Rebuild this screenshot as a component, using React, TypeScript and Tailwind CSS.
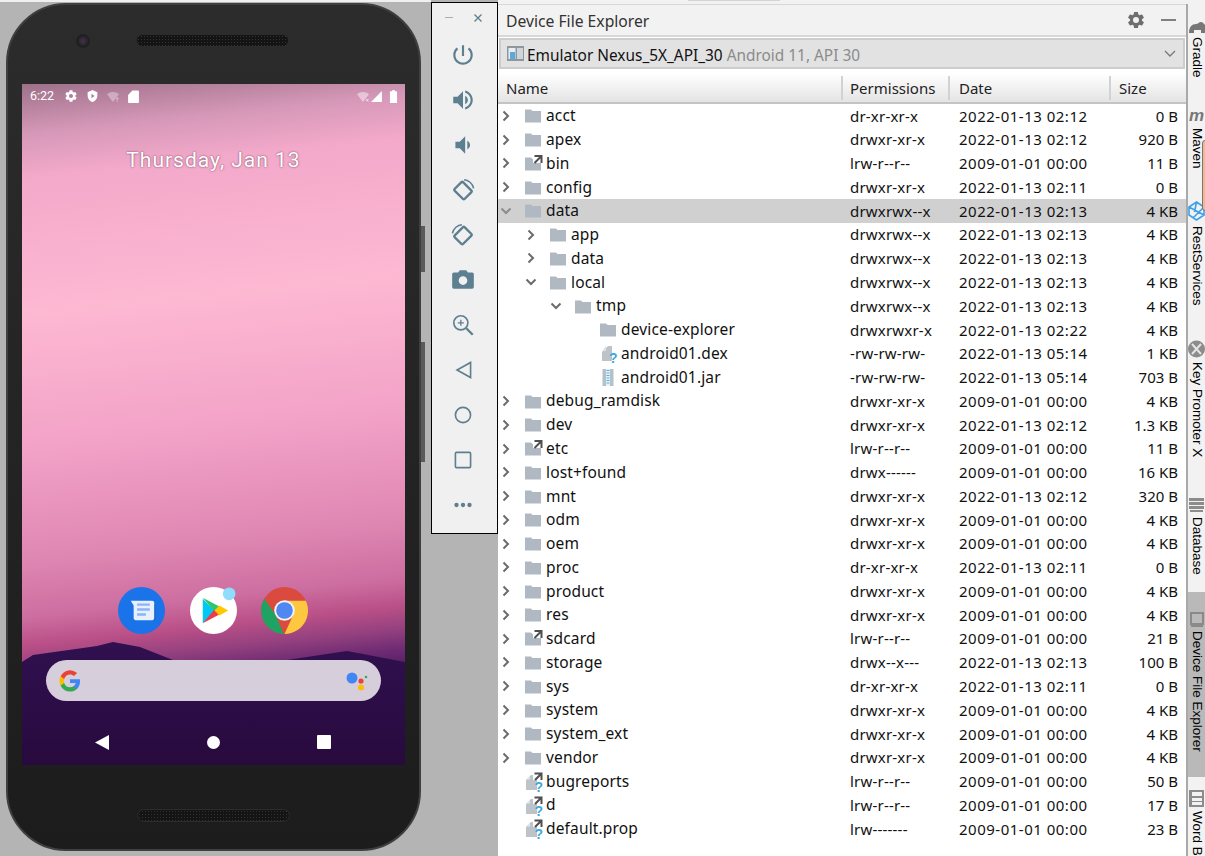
import React from 'react'

type Kind = 'folder' | 'link' | 'unknown' | 'jar' | 'linkfile'

interface Row {
  name: string
  depth: number
  arrow?: 'closed' | 'open'
  kind: Kind
  perm: string
  date: string
  size: string
  selected?: boolean
}

const D22 = '2022-01-13 '
const D09 = '2009-01-01 00:00'

const rows: Row[] = [
  { name: 'acct', depth: 0, arrow: 'closed', kind: 'folder', perm: 'dr-xr-xr-x', date: D22 + '02:12', size: '0 B' },
  { name: 'apex', depth: 0, arrow: 'closed', kind: 'folder', perm: 'drwxr-xr-x', date: D22 + '02:12', size: '920 B' },
  { name: 'bin', depth: 0, arrow: 'closed', kind: 'link', perm: 'lrw-r--r--', date: D09, size: '11 B' },
  { name: 'config', depth: 0, arrow: 'closed', kind: 'folder', perm: 'drwxr-xr-x', date: D22 + '02:11', size: '0 B' },
  { name: 'data', depth: 0, arrow: 'open', kind: 'folder', perm: 'drwxrwx--x', date: D22 + '02:13', size: '4 KB', selected: true },
  { name: 'app', depth: 1, arrow: 'closed', kind: 'folder', perm: 'drwxrwx--x', date: D22 + '02:13', size: '4 KB' },
  { name: 'data', depth: 1, arrow: 'closed', kind: 'folder', perm: 'drwxrwx--x', date: D22 + '02:13', size: '4 KB' },
  { name: 'local', depth: 1, arrow: 'open', kind: 'folder', perm: 'drwxrwx--x', date: D22 + '02:13', size: '4 KB' },
  { name: 'tmp', depth: 2, arrow: 'open', kind: 'folder', perm: 'drwxrwx--x', date: D22 + '02:13', size: '4 KB' },
  { name: 'device-explorer', depth: 3, kind: 'folder', perm: 'drwxrwxr-x', date: D22 + '02:22', size: '4 KB' },
  { name: 'android01.dex', depth: 3, kind: 'unknown', perm: '-rw-rw-rw-', date: D22 + '05:14', size: '1 KB' },
  { name: 'android01.jar', depth: 3, kind: 'jar', perm: '-rw-rw-rw-', date: D22 + '05:14', size: '703 B' },
  { name: 'debug_ramdisk', depth: 0, arrow: 'closed', kind: 'folder', perm: 'drwxr-xr-x', date: D09, size: '4 KB' },
  { name: 'dev', depth: 0, arrow: 'closed', kind: 'folder', perm: 'drwxr-xr-x', date: D22 + '02:12', size: '1.3 KB' },
  { name: 'etc', depth: 0, arrow: 'closed', kind: 'link', perm: 'lrw-r--r--', date: D09, size: '11 B' },
  { name: 'lost+found', depth: 0, arrow: 'closed', kind: 'folder', perm: 'drwx------', date: D09, size: '16 KB' },
  { name: 'mnt', depth: 0, arrow: 'closed', kind: 'folder', perm: 'drwxr-xr-x', date: D22 + '02:12', size: '320 B' },
  { name: 'odm', depth: 0, arrow: 'closed', kind: 'folder', perm: 'drwxr-xr-x', date: D09, size: '4 KB' },
  { name: 'oem', depth: 0, arrow: 'closed', kind: 'folder', perm: 'drwxr-xr-x', date: D09, size: '4 KB' },
  { name: 'proc', depth: 0, arrow: 'closed', kind: 'folder', perm: 'dr-xr-xr-x', date: D22 + '02:11', size: '0 B' },
  { name: 'product', depth: 0, arrow: 'closed', kind: 'folder', perm: 'drwxr-xr-x', date: D09, size: '4 KB' },
  { name: 'res', depth: 0, arrow: 'closed', kind: 'folder', perm: 'drwxr-xr-x', date: D09, size: '4 KB' },
  { name: 'sdcard', depth: 0, arrow: 'closed', kind: 'link', perm: 'lrw-r--r--', date: D09, size: '21 B' },
  { name: 'storage', depth: 0, arrow: 'closed', kind: 'folder', perm: 'drwx--x---', date: D22 + '02:13', size: '100 B' },
  { name: 'sys', depth: 0, arrow: 'closed', kind: 'folder', perm: 'dr-xr-xr-x', date: D22 + '02:11', size: '0 B' },
  { name: 'system', depth: 0, arrow: 'closed', kind: 'folder', perm: 'drwxr-xr-x', date: D09, size: '4 KB' },
  { name: 'system_ext', depth: 0, arrow: 'closed', kind: 'folder', perm: 'drwxr-xr-x', date: D09, size: '4 KB' },
  { name: 'vendor', depth: 0, arrow: 'closed', kind: 'folder', perm: 'drwxr-xr-x', date: D09, size: '4 KB' },
  { name: 'bugreports', depth: 0, kind: 'linkfile', perm: 'lrw-r--r--', date: D09, size: '50 B' },
  { name: 'd', depth: 0, kind: 'linkfile', perm: 'lrw-r--r--', date: D09, size: '17 B' },
  { name: 'default.prop', depth: 0, kind: 'linkfile', perm: 'lrw-------', date: D09, size: '23 B' },
]

function FileIcon({ kind }: { kind: Kind }) {
  const folder = 'M1 3.500h6l1.500 1.500h8.500v11.500H1z'
  return (
    <svg width="19" height="19" viewBox="0 0 19 19" className="shrink-0 overflow-visible">
      {(kind === 'folder' || kind === 'link') && <path d={folder} fill="#b0b9c1" />}
      {kind === 'link' && (
        <g>
          <rect x="9" y="0" width="10" height="9" fill="#fff" />
          <path d="M10.500 2h7v7M17 2.500l-6.500 6.500" fill="none" stroke="#4f4f4f" strokeWidth="2" />
        </g>
      )}
      {kind === 'unknown' && (
        <g>
          <path d="M3 17V8l6-6h4v15z" fill="#bcc4ca" />
          <path d="M3 7l4-5v5z" fill="#dfe3e6" />
          <text x="10" y="18.500" fontSize="14" fontWeight="700" fill="#3ea9dc" fontFamily="Liberation Sans, sans-serif">?</text>
        </g>
      )}
      {kind === 'jar' && (
        <g>
          <rect x="3.500" y="1" width="11" height="17" fill="#b6c0c7" />
          <rect x="7" y="1" width="4" height="17" fill="#e8f4fa" />
          <path d="M7.500 2.500h3M7.500 5h3M7.500 7.500h3M7.500 10h3M7.500 12.500h3M7.500 15h3" stroke="#55aedc" strokeWidth="1.200" />
        </g>
      )}
      {kind === 'linkfile' && (
        <g>
          <path d="M2 18V8l5-5h6v15z" fill="#bcc4ca" />
          <path d="M2 7.500l4-4v4z" fill="#e3e6e9" />
          <rect x="9" y="0" width="10" height="8" fill="#fff" />
          <path d="M10.500 1.500h7v6.500M17 2l-6 6" fill="none" stroke="#4f4f4f" strokeWidth="2" />
          <text x="10.500" y="19.500" fontSize="14" fontWeight="700" fill="#3ea9dc" fontFamily="Liberation Sans, sans-serif">?</text>
        </g>
      )}
    </svg>
  )
}

function Chevron({ open, muted }: { open: boolean; muted?: boolean }) {
  return (
    <svg width="12" height="12" viewBox="0 0 12 12">
      <path
        d={open ? 'M1.500 3.500L6 8l4.500-4.500' : 'M3.500 1.500L8 6l-4.500 4.500'}
        fill="none"
        stroke={muted ? '#8c8c8c' : '#6b6b6b'}
        strokeWidth="2"
      />
    </svg>
  )
}

function TreeRow({ row }: { row: Row }) {
  return (
    <div className={`flex h-[23.77px] items-center text-[15.500px] text-[#111] ${row.selected ? 'bg-[#d0d0d0]' : ''}`}>
      <div className="flex w-[343px] shrink-0 items-center" style={{ paddingLeft: row.depth * 25 }}>
        <div className="flex w-[16px] shrink-0 justify-center">
          {row.arrow && <Chevron open={row.arrow === 'open'} muted={row.selected} />}
        </div>
        <div className="ml-[10px] shrink-0">
          <FileIcon kind={row.kind} />
        </div>
        <span className="ml-[3px] tracking-[0.15px]">{row.name}</span>
      </div>
      <div className="w-[110px] shrink-0 pl-[9px] text-[15px] tracking-[0.2px]">{row.perm}</div>
      <div className="w-[151px] shrink-0 pl-[8px] text-[15px] tracking-[0.5px]">{row.date}</div>
      <div className="w-[76px] shrink-0 text-right text-[15px]">{row.size}</div>
    </div>
  )
}

function ColumnHead({ label, className }: { label: string; className: string }) {
  return <div className={`flex h-[24px] items-center border-r-2 border-[#d2d2d2] ${className}`}>{label}</div>
}

function FilePanel() {
  return (
    <div className="flex h-full w-[688px] flex-col bg-white font-['Noto_Sans',sans-serif]">
      <div className="h-[4px] shrink-0 bg-[#f2f2f2] pl-[190px]">
        <div className="h-[1px] w-[92px] bg-[#d4d4d4]" />
      </div>
      <div className="flex h-[33px] shrink-0 items-center justify-between border-t border-b-2 border-t-[#d8d8d8] border-b-[#d8d8d8] bg-[#f2f2f2] pl-[8px] pr-[10px] text-[15.700px] text-[#333]">
        <span className="translate-y-[2px]">Device File Explorer</span>
        <div className="flex items-center gap-[15px]">
          <svg width="20" height="20" viewBox="0 0 24 24" fill="#6e6e6e">
            <path d="M19.140 12.940a7.500 7.500 0 0 0 0-1.880l2.030-1.580a.5.5 0 0 0 .12-.64l-1.920-3.320a.5.5 0 0 0-.6-.22l-2.390.96a7 7 0 0 0-1.620-.94l-.36-2.540a.5.5 0 0 0-.5-.42h-3.840a.5.500 0 0 0-.48.420l-.36 2.540a7.300 7.300 0 0 0-1.620.94l-2.390-.96a.5.5 0 0 0-.6.220L2.690 8.840a.5.5 0 0 0 .12.640l2.030 1.580a7.500 7.500 0 0 0 0 1.880l-2.030 1.580a.5.5 0 0 0-.12.640l1.920 3.320c.12.220.37.290.6.220l2.390-.96c.5.380 1.040.700 1.620.940l.36 2.540c.05.240.24.420.48.420h3.840c.24 0 .44-.18.480-.42l.36-2.540a7 7 0 0 0 1.620-.94l2.390.96c.22.080.47 0 .6-.22l1.920-3.320a.5.5 0 0 0-.12-.64zM12 15.600a3.600 3.600 0 1 1 0-7.200 3.600 3.600 0 0 1 0 7.200z" />
          </svg>
          <div className="h-[2px] w-[15px] bg-[#808080]" />
        </div>
      </div>
      <div className="mx-[1px] mt-[1px] flex h-[31px] shrink-0 items-center justify-between border-2 border-[#cdcdcd] bg-[#e2e2e2] pl-[6px] pr-[6px] text-[15.400px]">
        <div className="flex items-center gap-[3px]">
          <svg width="17" height="15" viewBox="0 0 17 15">
            <rect x="0" y="0" width="17" height="15" fill="#8d979e" />
            <rect x="1.500" y="2" width="7" height="11" fill="#e8edf0" />
            <rect x="3" y="6" width="5" height="7" fill="#5aa9dd" />
            <rect x="10" y="2" width="6" height="11" fill="#cfd5d9" />
          </svg>
          <span className="translate-y-[2px] text-[#111]">Emulator Nexus_5X_API_30</span>
          <span className="ml-[1px] translate-y-[2px] text-[#8b8b8b]">Android 11, API 30</span>
        </div>
        <svg width="14" height="10" viewBox="0 0 14 10">
          <path d="M2 2l5 5 5-5" fill="none" stroke="#777" strokeWidth="1.300" />
        </svg>
      </div>
      <div className="mt-[4px] flex h-[31px] shrink-0 items-center border-b-2 border-[#c4c4c4] bg-gradient-to-b from-white to-[#e4e4e4] text-[15px] text-[#222]">
        <ColumnHead label="Name" className="w-[345px] pl-[8px] pt-[2px]" />
        <ColumnHead label="Permissions" className="w-[107px] pl-[7px] pt-[2px]" />
        <ColumnHead label="Date" className="w-[161px] pl-[9px] pt-[2px]" />
        <div className="pl-[8px] pt-[2px]">Size</div>
      </div>
      <div className="flex-1 overflow-hidden">
        {rows.map((row, i) => (
          <TreeRow key={i} row={row} />
        ))}
      </div>
    </div>
  )
}

const toolColor = '#5e7f8f'

function ToolIcon({ children }: { children: React.ReactNode }) {
  return (
    <div className="flex h-[45px] items-center justify-center pr-[3px]">
      <svg width="26" height="26" viewBox="0 0 24 24" fill={toolColor}>
        {children}
      </svg>
    </div>
  )
}

function EmulatorToolbar() {
  return (
    <div className="flex h-full w-[67px] shrink-0 flex-col bg-[#b4b4b4]">
      <div className="mt-[2px] h-[532px] border border-black bg-[#f0f0f0]">
        <div className="flex h-[29px] items-center justify-between pl-[13px] pr-[14px]">
          <div className="h-[1.500px] w-[8px] bg-[#9fb0b9]" />
          <svg width="10" height="10" viewBox="0 0 10 10">
            <path d="M1.500 1.500l7 7M8.500 1.500l-7 7" stroke={toolColor} strokeWidth="1.300" />
          </svg>
        </div>
        <ToolIcon>
          <path d="M13 3h-2v10h2V3zm4.830 2.170l-1.420 1.420C17.990 7.860 19 9.810 19 12c0 3.870-3.130 7-7 7s-7-3.130-7-7c0-2.190 1.010-4.140 2.580-5.420L6.170 5.170C4.230 6.820 3 9.260 3 12c0 4.970 4.030 9 9 9s9-4.030 9-9c0-2.740-1.230-5.180-3.170-6.830z" />
        </ToolIcon>
        <ToolIcon>
          <path d="M3 9v6h4l5 5V4L7 9H3zm13.500 3c0-1.770-1.020-3.290-2.500-4.030v8.050c1.480-.73 2.500-2.250 2.500-4.020zM14 3.230v2.060c2.890.86 5 3.540 5 6.710s-2.110 5.850-5 6.710v2.060c4.010-.91 7-4.490 7-8.770s-2.990-7.860-7-8.770z" />
        </ToolIcon>
        <ToolIcon>
          <path d="M18.500 12c0-1.770-1.020-3.290-2.500-4.030v8.050c1.480-.73 2.500-2.250 2.500-4.020zM5 9v6h4l5 5V4L9 9H5z" />
        </ToolIcon>
        <ToolIcon>
          <g fill="none" stroke={toolColor}>
            <rect x="5.500" y="7" width="13" height="11" rx="1" strokeWidth="2.200" transform="rotate(45 12 12.500)" />
            <path d="M13 2.500c4 .3 7.800 3.300 8.800 8" strokeWidth="1.400" />
          </g>
        </ToolIcon>
        <ToolIcon>
          <g fill="none" stroke={toolColor}>
            <rect x="5.500" y="7" width="13" height="11" rx="1" strokeWidth="2.200" transform="rotate(-45 12 12.500)" />
            <path d="M11 2.500c-4 .3-7.800 3.300-8.800 8" strokeWidth="1.400" />
          </g>
        </ToolIcon>
        <ToolIcon>
          <path
            fillRule="evenodd"
            d="M9 3L7.500 5H3.500C2.700 5 2 5.700 2 6.500v12c0 .8.700 1.500 1.500 1.500h17c.8 0 1.500-.7 1.500-1.500v-12c0-.8-.7-1.500-1.500-1.500h-4L15 3H9zm3 5.500a4 4 0 1 1 0 8 4 4 0 0 1 0-8z"
          />
        </ToolIcon>
        <ToolIcon>
          <g fill="none" stroke={toolColor}>
            <circle cx="10" cy="10" r="6.500" strokeWidth="1.500" />
            <path d="M15 15l6 6" strokeWidth="2.200" />
            <path d="M10 7.200v5.600M7.200 10h5.600" strokeWidth="1.200" />
          </g>
        </ToolIcon>
        <ToolIcon>
          <path d="M19 5v14L6.500 12z" fill="none" stroke={toolColor} strokeWidth="1.500" />
        </ToolIcon>
        <ToolIcon>
          <circle cx="12" cy="12" r="7" fill="none" stroke={toolColor} strokeWidth="1.500" />
        </ToolIcon>
        <ToolIcon>
          <rect x="5" y="5" width="14" height="14" rx="1" fill="none" stroke={toolColor} strokeWidth="1.500" />
        </ToolIcon>
        <ToolIcon>
          <g>
            <circle cx="6" cy="12" r="2" />
            <circle cx="12" cy="12" r="2" />
            <circle cx="18" cy="12" r="2" />
          </g>
        </ToolIcon>
      </div>
    </div>
  )
}

function Speaker() {
  return (
    <div className="h-[13px] w-[153px] rounded-full border border-[#2c2c2c] bg-[#141414] bg-[radial-gradient(#333_0.8px,transparent_0.9px)] bg-[length:3px_3px]" />
  )
}

function StatusBar() {
  return (
    <div className="flex h-[24px] shrink-0 items-center justify-between pl-[8px] pr-[7px] font-['Roboto',sans-serif] text-[12.500px] text-white">
      <div className="flex items-center">
        <span className="w-[33px]">6:22</span>
        <svg width="14" height="14" viewBox="0 0 24 24" fill="#fff" className="ml-[1px]">
          <path fillRule="evenodd" d="M19.400 13a7.500 7.500 0 0 0 0-2l2.300-1.800-2.400-4.200-2.700 1.100a7 7 0 0 0-1.700-1L14.500 2h-5L9 5.100a7 7 0 0 0-1.700 1L4.700 5 2.300 9.200 4.600 11a7.500 7.500 0 0 0 0 2l-2.300 1.800 2.400 4.200 2.700-1.100a7 7 0 0 0 1.700 1l.4 3.100h5l.4-3.100a7 7 0 0 0 1.700-1l2.700 1.100 2.400-4.200zM12 15.500a3.500 3.500 0 1 1 0-7 3.500 3.500 0 0 1 0 7z" />
        </svg>
        <svg width="13" height="14" viewBox="0 0 24 24" fill="#fff" className="ml-[8px]">
          <path fillRule="evenodd" d="M12 1L3 5v6c0 5.500 3.800 10.700 9 12 5.200-1.300 9-6.500 9-12V5zM10 8l6 4-6 4z" />
        </svg>
        <svg width="14" height="13" viewBox="0 0 24 24" className="ml-[7px]">
          <path d="M1 8c6-6 16-6 22 0L12 22z" fill="#fff" fillOpacity="0.350" />
          <path d="M17 13h5v9h-5z" fill="#c58aa8" fillOpacity="0.700" />
          <path d="M18 15.500c1-1.500 3-1 3 .3 0 1.200-1.500 1.200-1.500 2.500M19.500 19.800v1.500" fill="none" stroke="#fff" strokeWidth="1.100" />
        </svg>
        <svg width="11" height="13" viewBox="0 0 20 24" fill="#fff" className="ml-[8px]">
          <path d="M8 1h10c1 0 2 1 2 2v19c0 1-1 2-2 2H2c-1 0-2-1-2-2V9z" />
        </svg>
      </div>
      <div className="flex items-center">
        <svg width="14" height="13" viewBox="0 0 24 24">
          <path d="M1 8c6-6 16-6 22 0L12 22z" fill="#fff" fillOpacity="0.450" />
          <path d="M18 17l4 4M22 17l-4 4" stroke="#fff" strokeWidth="1.500" />
        </svg>
        <svg width="13" height="13" viewBox="0 0 24 24" fill="#fff">
          <path d="M22 2v20H2z" />
        </svg>
        <svg width="9" height="13" viewBox="0 0 12 22" fill="#fff" className="ml-[6px]">
          <path d="M4 0h4v2h3c.6 0 1 .4 1 1v18c0 .6-.4 1-1 1H1c-.6 0-1-.4-1-1V3c0-.6.4-1 1-1h3z" />
        </svg>
      </div>
    </div>
  )
}

function HomeDock() {
  return (
    <div className="flex items-center pl-[96px]">
      <svg width="47" height="47" viewBox="0 0 48 48">
        <circle cx="24" cy="24" r="24" fill="#1a73e8" />
        <path d="M16 33h20c1 0 2 .5 2 1.500V18h-2z" fill="#1357b0" />
        <path d="M13 14h22c1 0 2 1 2 2v16c0 1-1 2-2 2H18c-1 0-2-1-2-2V19z" fill="#e8f0fe" />
        <path d="M19.500 18h13M19.500 23h13M19.500 28h9" stroke="#8ab4f8" strokeWidth="2.500" />
      </svg>
      <svg width="47" height="47" viewBox="0 0 48 48" className="ml-[25px]">
        <circle cx="24" cy="24" r="24" fill="#fff" />
        <path d="M13 12l13 13-13 12z" fill="#00c8f4" />
        <path d="M13 11l17 9-5 5z" fill="#2fc56b" />
        <path d="M13 37l17-9-5-5z" fill="#ef3b48" />
        <path d="M30 19l9 5-9 5-5-5z" fill="#ffc900" />
        <circle cx="40" cy="7" r="6.500" fill="#8fdcfb" />
      </svg>
      <svg width="47" height="47" viewBox="0 0 48 48" className="ml-[24px]">
        <circle cx="24" cy="24" r="24" fill="#db4a3e" />
        <path d="M24 14H45.800A24 24 0 0 1 24 48L32.700 29z" fill="#fdc83f" />
        <path d="M3.300 12L15.300 29 23 48A24 24 0 0 1 3.300 12z" fill="#1ea362" />
        <circle cx="24" cy="24" r="10.500" fill="#f1f3f4" />
        <circle cx="24" cy="24" r="8.500" fill="#5087f0" />
      </svg>
    </div>
  )
}

function SearchBar() {
  return (
    <div className="mx-[24px] mt-[26px] flex h-[41px] items-center justify-between rounded-full bg-[#d6cfdb] pl-[13px] pr-[13px]">
      <svg width="22" height="22" viewBox="0 0 24 24">
        <path d="M23 12.300c0-.8-.1-1.500-.2-2.300H12v4.300h6.200a5.300 5.300 0 0 1-2.300 3.500v2.900h3.700c2.200-2 3.400-5 3.400-8.400z" fill="#4285f4" />
        <path d="M12 23.500c3.100 0 5.700-1 7.600-2.800l-3.700-2.900c-1 .7-2.300 1.100-3.900 1.100-3 0-5.500-2-6.400-4.800H1.800v3A11.500 11.500 0 0 0 12 23.500z" fill="#34a853" />
        <path d="M5.600 14.100a6.900 6.900 0 0 1 0-4.400v-3H1.800a11.500 11.500 0 0 0 0 10.400z" fill="#fbbc05" />
        <path d="M12 4.900c1.700 0 3.200.6 4.400 1.700l3.300-3.300A11.500 11.500 0 0 0 1.800 6.700l3.800 3c.9-2.800 3.400-4.800 6.400-4.800z" fill="#ea4335" />
      </svg>
      <svg width="22" height="20" viewBox="0 0 22 20">
        <circle cx="6" cy="7" r="5.500" fill="#4285f4" />
        <circle cx="15" cy="10" r="2.600" fill="#ea4335" />
        <circle cx="15" cy="16.500" r="3" fill="#fbbc05" />
        <circle cx="20" cy="6" r="1.300" fill="#34a853" />
      </svg>
    </div>
  )
}

function NavBar() {
  return (
    <div className="mt-[21px] flex h-[43px] items-center pb-[3px] pl-[73px]">
      <svg width="14" height="15" viewBox="0 0 14 15" fill="#fff">
        <path d="M14 0v15L0 7.500z" />
      </svg>
      <div className="ml-[98px] h-[13px] w-[13px] rounded-full bg-white" />
      <div className="ml-[97px] h-[14px] w-[14px] rounded-[1px] bg-white" />
    </div>
  )
}

function Phone() {
  return (
    <div className="relative ml-[6px] mt-[1px] h-[848px] w-[415px] rounded-[60px] border-2 border-[#3f3f3f] bg-gradient-to-b from-[#2c2c2c] to-[#1c1c1c]">
      <div className="flex h-[79px] items-center pb-[8px] pl-[68px]">
        <div className="h-[14px] w-[14px] rounded-full bg-[radial-gradient(circle,#3a3040_15%,#1d1d1f_60%,#303032)]" />
        <div className="ml-[46px]">
          <Speaker />
        </div>
      </div>
      <div className="relative mx-[14px] flex h-[681px] flex-col overflow-hidden bg-[linear-gradient(174deg,#9e7189_0%,#d698b8_7%,#f3a9ca_13%,#fdb8d2_32%,#f3a3c8_50%,#df87b3_66%,#cd6ea0_74%,#b94f87_78%,#95417f_81%,#6d2a72_84%,#4c1c61_87%)]">
        <svg viewBox="0 0 383 125" className="absolute bottom-0 left-0 h-[125px] w-[383px]">
          <defs>
            <linearGradient id="ridge" x1="0" y1="0" x2="0" y2="1">
              <stop offset="0" stopColor="#30104f" />
              <stop offset="1" stopColor="#280a3e" />
            </linearGradient>
          </defs>
          <path d="M0 22L11 15 61 8 75 6 91 2 118 7 151 20H265L325 11 383 22V125H0z" fill="url(#ridge)" />
        </svg>
        <div className="relative flex h-full flex-col">
          <StatusBar />
          <div className="mt-[37px] text-center font-['Roboto',sans-serif] text-[21px] font-normal tracking-[1px] text-white [text-shadow:0_0_2px_rgba(80,30,60,0.85)]">
            Thursday, Jan 13
          </div>
          <div className="flex-1" />
          <HomeDock />
          <SearchBar />
          <NavBar />
        </div>
      </div>
      <div className="mt-[44px] flex justify-center">
        <Speaker />
      </div>
      <div className="absolute -right-[6px] top-[221px] h-[46px] w-[4px] bg-[#5a5a5a]" />
      <div className="absolute -right-[6px] top-[337px] h-[120px] w-[4px] bg-[#5a5a5a]" />
    </div>
  )
}

function StripeTab({
  label,
  height,
  top,
  active,
  children,
}: {
  label: string
  height: number
  top: number
  active?: boolean
  children: React.ReactNode
}) {
  return (
    <div
      className={`flex shrink-0 flex-col items-center overflow-hidden ${active ? 'bg-[#b9b9b9]' : ''}`}
      style={{ height, paddingTop: top }}
    >
      <div className="flex shrink-0 justify-center">{children}</div>
      <span className="mt-[4px] shrink-0 whitespace-nowrap font-['Liberation_Sans',sans-serif] text-[13.500px] leading-[18px] text-black [writing-mode:vertical-rl]">
        {label}
      </span>
    </div>
  )
}

function RightStripe() {
  return (
    <div className="relative mt-[4px] flex h-full w-[19px] shrink-0 flex-col overflow-hidden border-l-2 border-[#a9a9a9] bg-[#f2f2f2]">
      <StripeTab label="Gradle" height={96} top={17}>
        <svg width="17" height="12" viewBox="0 0 17 12" fill="#777">
          <path d="M1 12c0-6 3-9 7-9 2 0 3-2 5-2s3 2 4 3v8h-4V9H6v3z" />
        </svg>
      </StripeTab>
      <StripeTab label="Maven" height={96} top={7}>
        <div className="font-['Liberation_Sans',sans-serif] text-[17px] font-bold italic leading-[17px] text-[#777]">m</div>
      </StripeTab>
      <StripeTab label="RestServices" height={140} top={4}>
        <svg width="17" height="22" viewBox="0 0 17 22" fill="none" stroke="#3fa0ea" strokeWidth="1.600">
          <path d="M8.500 2L16 7v8l-7.500 5L1 15V7zM1 7l15 8M16 7L5 18M8.500 2l-2 10" />
        </svg>
      </StripeTab>
      <StripeTab label="Key Promoter X" height={156} top={4}>
        <svg width="17" height="18" viewBox="0 0 17 18">
          <circle cx="8.500" cy="9" r="8.500" fill="#8c8c8c" />
          <path d="M4 4l9 10M13 4L4 14" stroke="#e4e4e4" strokeWidth="2" />
        </svg>
      </StripeTab>
      <StripeTab label="Database" height={100} top={5}>
        <svg width="15" height="16" viewBox="0 0 15 16" fill="#8c8c8c">
          <path d="M0 1h15v3H0zM0 5h15v3H0zM0 9h15v3H0zM1 13h13v2H1z" />
        </svg>
      </StripeTab>
      <StripeTab label="Device File Explorer" height={185} top={20} active>
        <svg width="14" height="15" viewBox="0 0 14 15" fill="none" stroke="#8a8a8a" strokeWidth="2">
          <rect x="1" y="1" width="12" height="11" />
          <path d="M1 14h12" />
        </svg>
      </StripeTab>
      <StripeTab label="Word Book" height={100} top={13}>
        <svg width="15" height="17" viewBox="0 0 15 17" fill="#8c8c8c">
          <path d="M0 0h15v17H0zM3 2v4h10V2zM3 8v3h10V8zM3 12v3h10v-3z" fillRule="evenodd" />
        </svg>
      </StripeTab>
      <div className="absolute -right-[4px] top-[136px] h-[71px] w-[7px] rounded-[3px] border border-[#777] bg-[#f3b98a]" />
    </div>
  )
}

export default function App() {
  return (
    <div className="flex h-[856px] w-[1205px] overflow-hidden bg-[#f2f2f2]">
      <div className="h-full w-[431px] shrink-0 bg-[#b4b4b4]">
        <div className="h-[2px] bg-[#f0f0f0]" />
        <Phone />
      </div>
      <EmulatorToolbar />
      <FilePanel />
      <RightStripe />
    </div>
  )
}
